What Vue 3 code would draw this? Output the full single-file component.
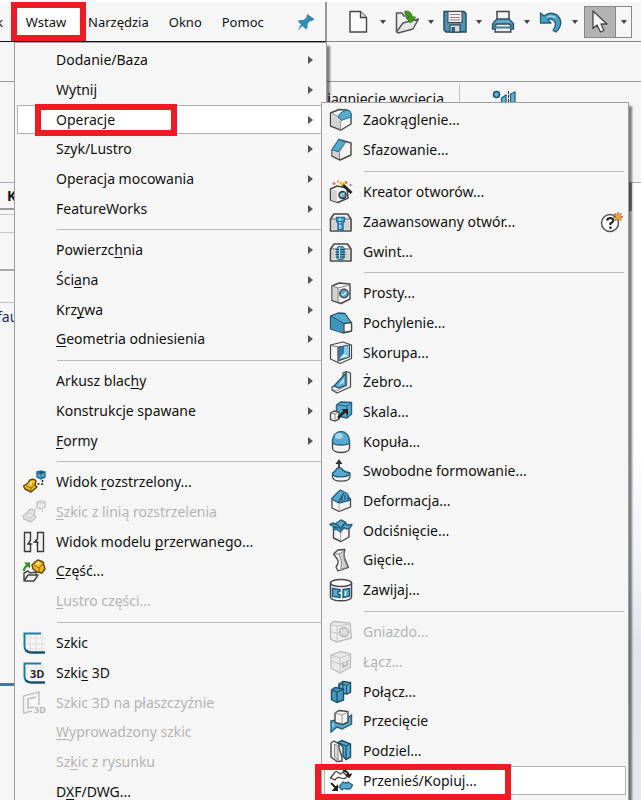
<script setup>
const blue = '#56a9cf'
const deep = '#1f6f96'
const ink = '#484848'
const face = '#f4f4f4'
const side = '#d2d2d2'

const icons = {
  fillet: `<path d="M1.500 5 10 1.500 18 2Q22.500 4 22 8V16L12 22 1.500 18Z" fill="${face}" stroke="${ink}" stroke-width="1.400" stroke-linejoin="round"/><path d="M2.200 6 9 9 11 11V21L2.200 17.500Z" fill="${side}"/><path d="M3 5.500 9 8.500" stroke="#888"/><path d="M9.500 10Q9 6 13 4L18 2Q23 3 22 9L12 12.500Q12 9.500 9.500 10Z" fill="${blue}" stroke="${deep}"/><path d="M11.500 13V21.500" stroke="#999"/>`,
  chamfer: `<path d="M3 12 10 1.500 22 5V17L11 22 3 18Z" fill="${face}" stroke="${ink}" stroke-width="1.400" stroke-linejoin="round"/><path d="M3.500 12.500 10 14.500V21L3.500 17.500Z" fill="${side}"/><path d="M3 11.500 10 1.500 16.500 4.500 9 14Z" fill="${blue}" stroke="${deep}"/><path d="M16 5 10.500 14V21" fill="none" stroke="#888"/>`,
  wizard: `<path d="M1.500 9 8 6 18 8 19 18 9 22.500 1.500 20Z" fill="${face}" stroke="${ink}" stroke-width="1.500" stroke-linejoin="round"/><path d="M2 9.500 8 11V22L2 20Z" fill="${side}"/><circle cx="13.500" cy="15" r="3.500" fill="${blue}" stroke="#333" stroke-width="1.400"/><path d="m11.500 16 4-3" stroke="#fff"/><path d="m13 4 9.500 9" stroke="#222" stroke-width="3"/><path d="m11 2 3 3" stroke="#ffc40c" stroke-width="3"/><path d="M5 2v3M3.500 3.500h3M9 .500v2M17 1v3M15.500 2.500h3M21.500 4v2M20.500 5h2" stroke="#e8702c" stroke-width="1.500"/>`,
  advanced: `<path d="M1.500 9 5 4H18.500L22 9V21H1.500Z" fill="${face}" stroke="${ink}" stroke-width="1.600" stroke-linejoin="round"/><path d="M2 9H22" stroke="#555"/><rect x="3" y="10.500" width="17.500" height="9" fill="${side}"/><path d="M7.500 7.500H15.500V11L14 13V19.500H9V13L7.500 11Z" fill="${blue}" stroke="${deep}" stroke-width="1.400"/><path d="M11 8v11" stroke="#b9e2f4" stroke-width="1.500"/><path d="M8 11.500h7M9 14h5" stroke="${deep}"/>`,
  thread: `<path d="M1.500 9 5 4H18.500L22 9V21H1.500Z" fill="${face}" stroke="${ink}" stroke-width="1.600" stroke-linejoin="round"/><path d="M2 9H22" stroke="#555"/><rect x="3" y="10.500" width="17.500" height="9" fill="${side}"/><rect x="8" y="6.500" width="7" height="13" rx="2" fill="${blue}" stroke="${deep}"/><path d="M6.500 9.500H16.500M6.500 12H16.500M6.500 14.500H16.500M7 17H16" stroke="#20495e" stroke-width="1.200"/><path d="M10.500 7v12" stroke="#b9e2f4"/>`,
  hole: `<path d="M3 5 10 2 21 3V18L12 22.500 3 19.500Z" fill="${face}" stroke="${ink}" stroke-width="1.400" stroke-linejoin="round"/><path d="M3.500 5.500 9.500 7V21L3.500 19Z" fill="${side}"/><path d="M9 7V21M9 7 21 4M3 5 9 7" stroke="#888" fill="none"/><circle cx="15" cy="12.500" r="4.200" fill="${blue}" stroke="${ink}" stroke-width="1.500"/><path d="M13 14q3 0 4-3" stroke="#d8f0fa" stroke-width="1.300" fill="none"/>`,
  draft: `<path d="M1.500 5 9 2 16 2.500 22.500 12V20L14 22 1.500 18Z" fill="${blue}" stroke="#285069" stroke-width="1.300" stroke-linejoin="round"/><path d="M2 5.500 14.500 12.500V21.500L2 17.500Z" fill="#3f94bc"/><path d="M2 5 15 12.500" stroke="#285069"/><path d="M15 12.500 22.500 11.500V20L15 21.500Z" fill="#fff" stroke="${ink}" stroke-width="1.300"/>`,
  shell: `<path d="M1.500 4 14 1 22.500 4V17.500L11 22.500 1.500 18Z" fill="${face}" stroke="${ink}" stroke-width="1.200" stroke-linejoin="round"/><path d="M9 6 20.500 4V16L9 20Z" fill="#2f7fa8" stroke="${ink}"/><path d="M15 5.500 20 4.500V15L15 12Z" fill="#83c6e3"/><path d="M10 18 15 12 20 15.500Z" fill="#c5e6f4"/><path d="M2 4.500 9 6V21" stroke="#777" fill="none"/>`,
  rib: `<path d="M14 3 17 1.500 21.500 3V17L8 23 3 20V17L14 12Z" fill="${face}" stroke="${ink}" stroke-width="1.200" stroke-linejoin="round"/><path d="M18 4V16L7 21 3 18" stroke="#999" fill="none"/><path d="M17 3V15L10 18 5 16Z" fill="${blue}" stroke="#285069" stroke-width="1.300"/><path d="m9 15.500 6-8V13Z" fill="#a5d8ee"/>`,
  scale: `<path d="M7.500 5 12 2 22.500 2.500V14L18 18 7.500 16Z" fill="${blue}" stroke="#28617e" stroke-width="1.400"/><path d="M8 5 18 6V17M18 6 22 3" fill="none" stroke="#28617e"/><path d="M1.500 13 5 11 10 12V19L6 21 1.500 19.500Z" fill="${face}" stroke="${ink}" stroke-width="1.300"/><path d="M2 13 6 14V20M6 14l3-1.500" fill="none" stroke="#888"/><path d="m9 18 8-8" stroke="#222" stroke-width="2.500"/><path d="M12.500 9H19V15.500Z" fill="#222"/>`,
  dome: `<path d="M3.500 12V18C3.500 24 20.500 24 20.500 18V12" fill="${face}" stroke="${ink}" stroke-width="1.400"/><path d="M3.500 12C3.500-2 20.500-2 20.500 12 20.500 16 3.500 16 3.500 12Z" fill="${blue}" stroke="#28617e" stroke-width="1.400"/><ellipse cx="10" cy="6" rx="4" ry="3" fill="#a3d5eb"/>`,
  freeform: `<path d="M3.500 15V18C4 23.500 20.500 23.500 21 18V15" fill="${face}" stroke="${ink}" stroke-width="1.300"/><path d="M3.500 14Q7 12 7.500 10 10 7 13 10 15 13 21 14C20 19 5 19 3.500 15Z" fill="${blue}" stroke="#28617e" stroke-width="1.400"/><path d="M10 9V2" stroke="#333" stroke-width="1.800"/><path d="M6.500 5 10 0 13.500 5Z" fill="#333"/>`,
  deform: `<path d="M3 11 9 7 21.500 10V18L10 22.500 3 19Z" fill="${face}" stroke="${ink}" stroke-width="1.300" stroke-linejoin="round"/><path d="M2.500 10 8 4 11.500 1 18 4.500 21.500 11 10 14Z" fill="${blue}" stroke="#28617e" stroke-width="1.400" stroke-linejoin="round"/><path d="M9.500 13 15 4M13 12V8M16 11V6M19 11V7" stroke="#28617e" stroke-width="1.500" fill="none"/><path d="M10 14V22" stroke="#aaa"/>`,
  indent: `<path d="M4.500 9 20 9V18L12 22.500 4.500 19Z" fill="${face}" stroke="${ink}" stroke-width="1.400" stroke-linejoin="round"/><path d="M11.500 13V22" stroke="#aaa"/><path d="M1 5.500 4 4 6 5 12 1 16 3 18 6 23 5.500 21 9 17.500 10 15 8.500 11.500 13 8 10.500 5 10.500 4 7Z" fill="${blue}" stroke="#28617e" stroke-width="1.400" stroke-linejoin="round"/><path d="M6 5 9 6.500 11.500 10 16 4M5 8l4 1" fill="none" stroke="#1b4f69" stroke-width="1.300"/>`,
  flex: `<path d="M4.500 6 9 2 16 1.500Q14 7 16 11L19.500 19.500 9 23 7 19Q11 14 7.500 10Z" fill="${face}" stroke="${ink}" stroke-width="1.300" stroke-linejoin="round"/><path d="M10 6 15 3Q14 8 15.500 12L18.500 19 12 21.500Q14 14 10 6Z" fill="#cfcfcf" stroke="#888"/><path d="M4.500 6 10 6" stroke="#777"/>`,
  wrap: `<path d="M1.500 5V19C2 24 22 24 22.500 19V5" fill="${face}" stroke="${ink}" stroke-width="1.500"/><ellipse cx="12" cy="5" rx="10.500" ry="3.500" fill="#fff" stroke="${ink}" stroke-width="1.500"/><path d="M3.500 10.500 11 11.500V13.500H9V16.500H11V19.500L3.500 18.500Z" fill="${blue}" stroke="#205b78" stroke-width="1.400"/><path d="M14 11.500 20.500 10.500V18L14 19.500Z" fill="${blue}" stroke="#205b78" stroke-width="1.400"/><path d="M16.500 13v5" stroke="#d8f0fa" stroke-width="1.500"/>`,
  cavity: `<path d="M1.500 4 5 1.500 21 3 22.500 18 8 22 1.500 19Z" fill="#ececec" stroke="#bcbcbc" stroke-width="1.300"/><path d="M2 5 8 6 22 4M8 6V22M2 12 8 13 22 12" fill="none" stroke="#c6c6c6"/><circle cx="15" cy="12" r="4.500" fill="#dcdcdc" stroke="#b4b4b4" stroke-width="1.300"/>`,
  join: `<path d="M2 5 12 1.500 21.500 4V17L11 23 2 18Z" fill="#e8e8e8" stroke="#bcbcbc" stroke-width="1.300"/><path d="M2 5 11 8 21 4.500M11 8V22M2 11 11 14 21 10" fill="none" stroke="#c6c6c6"/><path d="M14 13V17L18 15V11" fill="none" stroke="#b0b0b0" stroke-width="1.500"/>`,
  combine: `<path d="M10 4 14 1.500 21.500 2.500V12L18 14 10 13Z" fill="${blue}" stroke="#1f4f68" stroke-width="1.400"/><path d="M10 4 17.500 5V13M18 5 21 3M14 1.500V9" fill="none" stroke="#1f4f68"/><path d="M2.500 10 6 7.500 14.500 9V20L8 22.500 2.500 19.500Z" fill="#4599c0" stroke="#1f4f68" stroke-width="1.400"/><path d="M3 10 8 12V22M8 12 14 9.500M10 8V5" fill="none" stroke="#1f4f68" stroke-width="1.300"/>`,
  intersect: `<path d="M2 12 8 11 13 14 22.500 6V15L13 20 8 18 2 23Z" fill="${blue}" stroke="#28617e" stroke-width="1.400"/><path d="M6 4 10 1.500 19 2.500V13L14 15.500 6 13.500Z" fill="${face}" stroke="${ink}" stroke-width="1.400" stroke-linejoin="round"/><path d="M6 4 13 6V15M13 6 19 3" fill="none" stroke="#999"/><path d="M4 18V14" stroke="#b4def0"/>`,
  split: `<path d="M2 4 5 2 10 5V9L13 18V22L8 22.500 2 18Z" fill="${face}" stroke="${ink}" stroke-width="1.400"/><path d="M5.500 5V18L9 21V7Z" fill="#dcdcdc" stroke="#888"/><path d="M9 3.500 13 1.500 21.500 5V18L17 20.500 14 17V8Z" fill="${blue}" stroke="#1f4f68" stroke-width="1.400"/><path d="M10 4 17 7V20M17 7 21 5" fill="none" stroke="#1f4f68" stroke-width="1.300"/>`,
  move: `<path d="M1.500 9 6 3Q8 2 10 4T14 3L18 7Q16 11 12 9T6 11Z" fill="#fff" stroke="#444" stroke-width="1.300"/><path d="M10 18 14 13Q17 15 19 13L23.500 16Q22 21 18 20T13 21Z" fill="${blue}" stroke="#28617e" stroke-width="1.300"/><path d="M14 1.500Q19 2 20 7" fill="none" stroke="#222" stroke-width="1.800"/><path d="M16 5.500 23.500 4.500 20 9.500Z" fill="#222"/><path d="m2 14 5 5" stroke="#222" stroke-width="2"/><path d="M9 15V22H2.500Z" fill="#222"/>`,
  explode: `<path d="M1.500 16 6 13 8 10Q12 8 14 11L13 15 15 17 9 22 3 19Z" fill="#f0b51f" stroke="#5d480f" stroke-width="1.400" stroke-linejoin="round"/><path d="m4 16 5 2 4-3M9 18v3M7 12l4 2" fill="none" stroke="#8a6813"/><path d="m6 14 3-3 2 1-2 3Z" fill="#ffe07a"/><path d="M15 2 19 1 23 2V7L19 9 15 7Z" fill="${blue}" stroke="${deep}" stroke-width="1.400"/><path d="m15 3 4 1 4-2M19 4v4" stroke="${deep}"/><path d="M20.500 10V14H14" fill="none" stroke="#222" stroke-width="1.500" stroke-dasharray="2 1.500"/>`,
  explodeOff: `<path d="M1 16 5 13 7 10Q11 8 13 11L12 15 14 17 9 22 2 19Z" fill="#e4e4e4" stroke="#c2c2c2" stroke-width="1.400"/><path d="m3 16 5 2 4-3M8 18v3M6 12l4 2" fill="none" stroke="#c8c8c8"/><path d="M15 2 19 1 23 2V7L19 9 15 7Z" fill="#eee" stroke="#c4c4c4" stroke-width="1.300"/><path d="m15 3 4 1 4-2M13 8l3 3M20.500 10V13" fill="none" stroke="#c4c4c4" stroke-dasharray="2 1"/>`,
  breakView: `<path d="M2.500 2.500H8.500V10L6 14H8.500V21.500H2.500ZM21.500 2.500H15.500V9L12.500 12H15.500V21.500H21.500Z" fill="#f0f0f0" stroke="#3a3a3a" stroke-width="1.400"/><path d="m8.500 10-2 4h4M15.500 8.500l-3 3.500h3.500l-1 4" fill="none" stroke="#333"/>`,
  part: `<path d="M10 6 13 3 16 1 21 3 23 10 20 14 15 13 11 10Z" fill="#f0b51f" stroke="#5d480f" stroke-width="1.400" stroke-linejoin="round"/><path d="m12 6 5 3 4-4M17 9v4" fill="none" stroke="#8a6813"/><path d="m14 5 3-3 1 2-2 3Z" fill="#ffe07a"/><path d="M2 12Q2 8 6 6" fill="none" stroke="#349018" stroke-width="2.200"/><path d="M2 3.500H8V9.500Z" fill="#349018"/><path d="M2 22V14L6 12 8 14 14 13V16M2 22 6 16H16L12 22Z" fill="#ededed" stroke="#444" stroke-width="1.400" stroke-linejoin="round"/>`,
  sketch: `<path d="M8 3V21M14 3V21M20 1V23M3 7H23M3 13H23M3 18H23" stroke="#dedede"/><path d="M19 2.500H2.500V15Q2.500 21.500 9 21.500H23" fill="none" stroke="#1f7aa5" stroke-width="2"/><path d="M4 19Q6 21.500 9 21.500H23" fill="none" stroke="#174c69" stroke-width="2"/>`,
  sketch3d: `<path d="M20 1V6M14 3V6M3 7H23" stroke="#dedede"/><path d="M19 2.500H2.500V15Q2.500 21.500 9 21.500H23" fill="none" stroke="#1f7aa5" stroke-width="2"/><path d="M4 19Q6 21.500 9 21.500H23" fill="none" stroke="#174c69" stroke-width="2"/><text x="8" y="17" font-family="Open Sans, sans-serif" font-size="11" font-weight="700" fill="#222">3D</text>`,
  plane3d: `<path d="M1.500 5 17 1V14M1.500 5V22L10 20" fill="none" stroke="#c2c2c2" stroke-width="1.500"/><path d="M14 6 6 8V17L12 16" fill="none" stroke="#c6c6c6" stroke-width="2"/><text x="12" y="22" font-family="Open Sans, sans-serif" font-size="9" font-weight="700" fill="#b5b5b5">3D</text>`,
  help: `<circle cx="10" cy="13" r="8.500" fill="#fff" stroke="#555" stroke-width="1.500"/><path d="M7 10.500Q7.500 8 10.500 8 13.500 8.500 13 11 12.500 12.500 10.500 13.500V15" fill="none" stroke="#222" stroke-width="2.200"/><rect x="9.300" y="16.500" width="2.300" height="2.300" fill="#222"/><path d="M18 2V12M13 7H23M14.500 3.500 21.500 10.500M21.500 3.500 14.500 10.500" stroke="#bd5b1d" stroke-width="1.300"/><circle cx="18" cy="7" r="2.300" fill="#f7a928"/>`,
  newDoc: `<path d="M3 1.500H13.500L19.500 7.500V22H3Z" fill="#fafafa" stroke="#444" stroke-width="1.400" stroke-linejoin="round"/><path d="M13.500 1.500V7.500H19.500" fill="#ddd" stroke="#444" stroke-width="1.300"/>`,
  open: `<path d="M1.500 22V3H7L9 6H16V10" fill="#eee" stroke="#555" stroke-width="1.500"/><path d="M1.500 22 8 13 23.500 9 18 19 3 23Z" fill="#e6e6e6" stroke="#555" stroke-width="1.400" stroke-linejoin="round"/><path d="M10 1Q17 1 17 7H20.500L15.500 13 11 7.500H14Q13.500 4 10 4Z" fill="#3f9c1a" stroke="#2d7a12"/>`,
  save: `<path d="M1 1.500H21L23 3.500V22H3L1 20Z" fill="#4a93b8" stroke="#1f4961" stroke-width="1.400"/><rect x="5" y="1.500" width="14" height="11" fill="#f1f1f1" stroke="#444"/><path d="M7 4.500H17M7 7.500H17M7 10H17" stroke="#888"/><rect x="7" y="15" width="10" height="7" fill="#ddd" stroke="#333"/><rect x="8.500" y="17" width="3.500" height="5" fill="#1d6387"/>`,
  print: `<path d="M6 10V1.500H18V10" fill="#f5f5f5" stroke="#444" stroke-width="1.500"/><path d="M4 11 6 9H18L20 11 22.500 14V19H1.500V14Z" fill="#5aa9ce" stroke="#285069" stroke-width="1.300"/><path d="M2 14H22V18H2Z" fill="#3a80a4"/><path d="M5 14H19L20 22H4Z" fill="#eee" stroke="#444" stroke-width="1.300"/><path d="M3 17.500H21" stroke="#3a80a4" stroke-width="2"/>`,
  undo: `<path d="M1.500 3 5 6Q11 1 18 5 26 13 17 22L14 20.500Q19 13 14 10 11 8 9 10L12 13H1.500Z" fill="#4b9fc5" stroke="#225f7d" stroke-width="1.300" stroke-linejoin="round"/><path d="M8 7Q13 5 17 8" stroke="#a8d9ec" fill="none" stroke-width="1.300"/>`,
  cursor: `<path d="M5 1V18.500L9 15 12.500 22 16 20.500 13 14H19Z" fill="#fff" stroke="#444" stroke-width="1.300" stroke-linejoin="round"/>`,
  pin: `<path d="M14 4 21.500 9 19 11 17 11 14.500 14 14.500 18 13 19.500 9.500 16 4.500 20.500 8 14.500 5 11.500 6.500 10 10.500 10 13.500 7.500Z" fill="#3189b8"/>`,
  mirror: `<circle cx="4.500" cy="4.500" r="3" fill="#5eb0d4" stroke="#1f4f68" stroke-width="1.500"/><path d="M9.500 8 14 5V20H9.500ZM18.500 4 23 2V20H18.500Z" fill="#5eb0d4" stroke="#28617e" stroke-width="1.300"/><path d="M16.500 1V22" stroke="#333" stroke-dasharray="3 1"/>`,
}

const menu = [
  [
    { label: 'Dodanie/Baza', sub: true },
    { label: 'Wytnij', sub: true },
    { label: 'Operacje', sub: true, active: true },
    { label: 'Szyk/Lustro', sub: true },
    { label: 'Operacja mocowania', sub: true },
    { label: 'FeatureWorks', sub: true },
  ],
  [
    { label: 'Powierzc&hnia', sub: true },
    { label: 'Ści&ana', sub: true },
    { label: 'Krz&ywa', sub: true },
    { label: '&Geometria odniesienia', sub: true },
  ],
  [
    { label: 'Arkusz blac&hy', sub: true },
    { label: 'Konstrukcje spawane', sub: true },
    { label: '&Formy', sub: true },
  ],
  [
    { label: 'Widok &rozstrzelony...', icon: 'explode' },
    { label: '&Szkic z linią rozstrzelenia', icon: 'explodeOff', off: true },
    { label: 'Widok modelu &przerwanego...', icon: 'breakView' },
    { label: '&Część...', icon: 'part' },
    { label: '&Lustro części...', off: true },
  ],
  [
    { label: 'Szkic', icon: 'sketch' },
    { label: 'Szki&c 3D', icon: 'sketch3d' },
    { label: 'Szkic 3D na płaszczyźnie', icon: 'plane3d', off: true },
    { label: '&Wyprowadzony szkic', off: true },
    { label: 'Sz&kic z rysunku', off: true },
    { label: 'D&XF/DWG...' },
  ],
]

const submenu = [
  [
    { label: 'Zaokrąglenie...', icon: 'fillet' },
    { label: 'Sfazowanie...', icon: 'chamfer' },
  ],
  [
    { label: 'Kreator otworów...', icon: 'wizard' },
    { label: 'Zaawansowany otwór...', icon: 'advanced', badge: 'help' },
    { label: 'Gwint...', icon: 'thread' },
  ],
  [
    { label: 'Prosty...', icon: 'hole' },
    { label: 'Pochylenie...', icon: 'draft' },
    { label: 'Skorupa...', icon: 'shell' },
    { label: 'Żebro...', icon: 'rib' },
    { label: 'Skala...', icon: 'scale' },
    { label: 'Kopuła...', icon: 'dome' },
    { label: 'Swobodne formowanie...', icon: 'freeform' },
    { label: 'Deformacja...', icon: 'deform' },
    { label: 'Odciśnięcie...', icon: 'indent' },
    { label: 'Gięcie...', icon: 'flex' },
    { label: 'Zawijaj...', icon: 'wrap' },
  ],
  [
    { label: 'Gniazdo...', icon: 'cavity', off: true },
    { label: 'Łącz...', icon: 'join', off: true },
    { label: 'Połącz...', icon: 'combine' },
    { label: 'Przecięcie', icon: 'intersect' },
    { label: 'Podziel...', icon: 'split' },
    { label: 'Przenieś/Kopiuj...', icon: 'move', active: true },
  ],
]

const panels = [
  { name: 'main', groups: menu },
  { name: 'sub', groups: submenu },
]

const tools = ['newDoc', 'open', 'save', 'print', 'undo']

// Splits a label at its "&" mnemonic mark: text before, underlined letter, rest.
function parts(label) {
  const i = label.indexOf('&')
  return i < 0 ? [label, '', ''] : [label.slice(0, i), label[i + 1], label.slice(i + 2)]
}
</script>

<template>
  <div class="app">
    <header class="top">
      <nav class="menubar">
        <button class="bar-item clipped">k</button>
        <button class="bar-item open">Wstaw<span class="mark"></span></button>
        <button class="bar-item">Narzędzia</button>
        <button class="bar-item">Okno</button>
        <button class="bar-item">Pomoc</button>
        <button class="pin" aria-label="Pin"><svg class="icon" viewBox="0 0 24 24" v-html="icons.pin"></svg></button>
      </nav>
      <div class="toolbar">
        <div v-for="t in tools" :key="t" class="tool">
          <button class="tool-main"><svg class="icon" viewBox="0 0 24 24" v-html="icons[t]"></svg></button>
          <button class="tool-drop"><span class="caret"></span></button>
        </div>
        <div class="tool select">
          <button class="tool-main"><svg class="icon" viewBox="0 0 24 24" v-html="icons.cursor"></svg></button>
          <button class="tool-drop"><span class="caret"></span></button>
        </div>
      </div>
    </header>
    <div class="strip"></div>
    <div class="ribbon">
      <div class="ribbon-group">Wyciągnięcie wycięcia</div>
      <svg class="icon" viewBox="0 0 24 24" v-html="icons.mirror"></svg>
    </div>
    <main class="work">
      <aside class="tree">
        <div class="tab">K</div>
        <div class="tree-gap"></div>
        <div class="tree-row"></div>
        <div class="tree-row tall"></div>
        <div class="tree-row"></div>
        <div class="tree-label">fault</div>
        <div class="tree-foot"></div>
      </aside>
      <section class="view"><div class="scroll"></div></section>
    </main>

    <div v-for="p in panels" :key="p.name" class="panel" :class="p.name">
      <ul v-for="(g, gi) in p.groups" :key="gi" class="group">
        <li v-for="item in g" :key="item.label" class="row">
          <button class="item" :class="{ active: item.active }" :disabled="item.off">
            <span class="slot"><svg v-if="item.icon" class="icon" viewBox="0 0 24 24" v-html="icons[item.icon]"></svg></span>
            <span class="label">{{ parts(item.label)[0] }}<u>{{ parts(item.label)[1] }}</u>{{ parts(item.label)[2] }}</span>
            <span v-if="item.sub" class="arrow"></span>
            <svg v-if="item.badge" class="icon" viewBox="0 0 24 24" v-html="icons[item.badge]"></svg>
          </button>
          <span v-if="item.active" class="mark"></span>
        </li>
      </ul>
    </div>
  </div>
</template>

<style>
body {
  background: #f6f6f6;
}
</style>

<style scoped>
.app {
  position: relative;
  display: flex;
  flex-direction: column;
  height: 100vh;
  overflow: hidden;
  color: #111;
  font: 14px/20px "Noto Sans", "Open Sans", sans-serif;
}
button {
  margin: 0;
  padding: 0;
  border: 0;
  background: none;
  color: inherit;
  font: inherit;
  white-space: nowrap;
}
.icon {
  display: block;
  flex: none;
  width: 24px;
  height: 24px;
}
.top {
  display: flex;
  height: 42px;
  flex: none;
  box-sizing: border-box;
  border-top: 2px solid #fff;
}
.menubar {
  display: flex;
  align-items: stretch;
  width: 325px;
  flex: none;
  border-bottom: 1px solid #111;
  border-right: 2px solid #999;
  font-size: 13px;
}
.bar-item {
  position: relative;
  padding: 0 10px;
}
.clipped {
  width: 14px;
  padding: 0;
  text-align: left;
  text-indent: -4px;
}
.open {
  width: 64px;
  padding: 0;
  background: #fff;
}
.pin {
  margin-left: auto;
  padding-right: 8px;
}
.toolbar {
  display: flex;
  flex: 1;
  align-items: center;
  padding-left: 20px;
  border-bottom: 1px solid #888;
}
.tool {
  display: flex;
  width: 48px;
  flex: none;
}
.tool-drop {
  display: flex;
  flex: 1;
  align-items: center;
  justify-content: center;
}
.caret {
  border: 3px solid transparent;
  border-top: 4px solid #444;
  border-bottom: 0;
}
.select {
  height: 32px;
  box-sizing: border-box;
  margin-left: -3px;
  border: 1px solid #888;
}
.select .tool-main {
  width: 31px;
  padding-left: 3px;
  border-right: 1px solid #888;
  background: #b3b3b3;
}
.strip {
  height: 39px;
  flex: none;
  border-bottom: 1px solid #999;
}
.ribbon {
  display: flex;
  height: 100px;
  flex: none;
  align-items: flex-start;
  border-bottom: 1px solid #aaa;
}
.ribbon .icon {
  margin: 8px 0 0 32px;
}
.ribbon-group {
  box-sizing: border-box;
  width: 460px;
  height: 90px;
  flex: none;
  margin-top: 2px;
  padding: 5px 15px 0 0;
  border-right: 1px solid #c4c4c4;
  text-align: right;
}
.work {
  display: flex;
  flex: 1;
}
.tree {
  display: flex;
  flex-direction: column;
  width: 20px;
  flex: none;
}
.tab {
  height: 22px;
  padding: 3px 0 0 7px;
  border-bottom: 2px solid #999;
  font-weight: 700;
}
.tree-gap {
  height: 4px;
  border-bottom: 1px solid #c4c4c4;
}
.tree-row {
  height: 17px;
  border-bottom: 1px solid #c4c4c4;
}
.tree-row:nth-child(5) {
  height: 31px;
}
.tall {
  height: 36px;
  border-bottom: 2px solid #aaa;
}
.tree-label {
  padding: 4px 0;
  text-indent: -3px;
  color: #1a2a5a;
}
.tree-foot {
  height: 352px;
  border-bottom: 3px solid #2b7fc0;
}
.view {
  flex: 1;
  padding-left: 608px;
  background: linear-gradient(#fff 40%, #f2f3f8 62%, #e0e4ee 75%, #e4e8f0);
}
.scroll {
  width: 4px;
  height: 28px;
  background: #999;
}
.panel {
  position: absolute;
  box-sizing: border-box;
  padding: 2px;
  border: 1px solid #a0a0a0;
  background: #f6f6f6;
  box-shadow: 3px 4px 2px rgba(0, 0, 0, 0.5);
}
.main {
  top: 42px;
  left: 14px;
  width: 313px;
}
.sub {
  top: 102px;
  left: 321px;
  width: 308px;
  padding-bottom: 8px;
}
.group {
  margin: 0;
  padding: 0;
  list-style: none;
}
.group + .group::before {
  content: "";
  display: block;
  height: 1px;
  margin: 6px 2px 5px 40px;
  background: #bbb;
}
.row {
  position: relative;
  height: 30px;
}
.row:nth-child(3n) {
  height: 29px;
}
.item {
  display: flex;
  width: 100%;
  height: 100%;
  box-sizing: border-box;
  align-items: center;
  padding: 0 1px 0 4px;
  border: 1px solid transparent;
  text-align: left;
}
.item:disabled {
  color: #b4b4b4;
}
.active {
  border-color: #b0b0b0;
  background: #fff;
}
.sub .active {
  width: 302px;
}
.slot {
  width: 24px;
  flex: none;
}
.label {
  flex: 1;
  padding-left: 10px;
}
.label u {
  text-decoration-skip-ink: none;
  text-underline-offset: 2px;
}
.arrow {
  margin-right: 9px;
  border: 4px solid transparent;
  border-left: 5px solid #555;
  border-right: 0;
}
.mark {
  position: absolute;
  box-sizing: border-box;
  border: 6px solid #ed1c24;
  pointer-events: none;
}
.open .mark {
  inset: 0 -8px 0 -3px;
}
.main .mark {
  inset: -1px 147px -2px 18px;
}
.sub .mark {
  inset: -2px 115px -5px -9px;
}
</style>
